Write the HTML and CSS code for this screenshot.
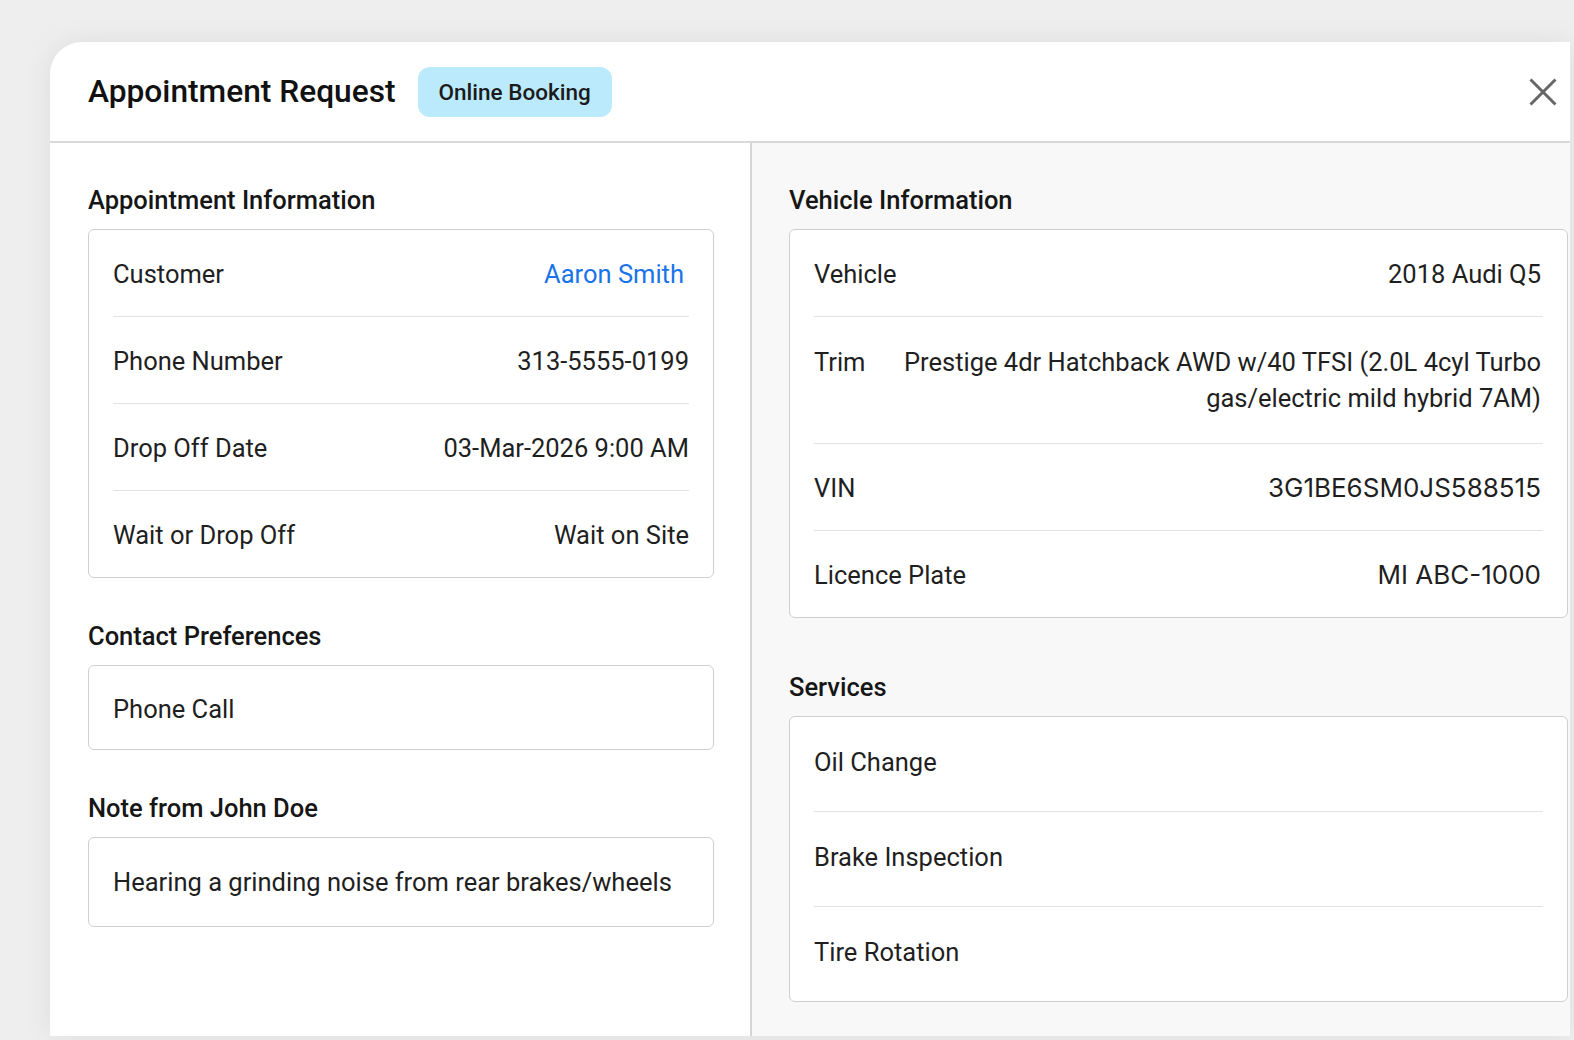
FILE: index.html
```html
<!DOCTYPE html>
<html lang="en">
<head>
<meta charset="utf-8">
<title>Appointment Request</title>
<link rel="stylesheet" href="styles.css">
</head>
<body>
<div class="stage">
  <div class="modal">
    <header class="modal-header">
      <div class="title-group">
        <h1 class="title">Appointment Request</h1>
        <span class="badge">Online Booking</span>
      </div>
      <button class="close" aria-label="Close">
        <svg width="28" height="28" viewBox="0 0 28 28"><path d="M1.5 1.5 L26.5 26.5 M26.5 1.5 L1.5 26.5" stroke="#666" stroke-width="3" fill="none"/></svg>
      </button>
    </header>
    <div class="modal-body">
      <section class="col col-left">
        <h2 class="section-title">Appointment Information</h2>
        <div class="card">
          <div class="row"><span class="label">Customer</span><span class="value link">Aaron Smith</span></div>
          <div class="row"><span class="label">Phone Number</span><span class="value">313-5555-0199</span></div>
          <div class="row"><span class="label">Drop Off Date</span><span class="value">03-Mar-2026 9:00 AM</span></div>
          <div class="row"><span class="label">Wait or Drop Off</span><span class="value">Wait on Site</span></div>
        </div>

        <h2 class="section-title spaced">Contact Preferences</h2>
        <div class="card">
          <div class="row compact"><span class="label">Phone Call</span></div>
        </div>

        <h2 class="section-title spaced">Note from John Doe</h2>
        <div class="card">
          <div class="row note"><span class="label">Hearing a grinding noise from rear brakes/wheels</span></div>
        </div>
      </section>

      <section class="col col-right">
        <h2 class="section-title">Vehicle Information</h2>
        <div class="card">
          <div class="row"><span class="label">Vehicle</span><span class="value">2018 Audi Q5</span></div>
          <div class="row multiline"><span class="label">Trim</span><span class="value">Prestige 4dr Hatchback AWD w/40 TFSI (2.0L 4cyl Turbo gas/electric mild hybrid 7AM)</span></div>
          <div class="row"><span class="label">VIN</span><span class="value code">3G1BE6SM0JS588515</span></div>
          <div class="row"><span class="label">Licence Plate</span><span class="value code">MI ABC-1000</span></div>
        </div>

        <h2 class="section-title spaced-lg">Services</h2>
        <div class="card services">
          <div class="row"><span class="label">Oil Change</span></div>
          <div class="row"><span class="label">Brake Inspection</span></div>
          <div class="row"><span class="label">Tire Rotation</span></div>
        </div>
      </section>
    </div>
  </div>
</div>
</body>
</html>
```
FILE: styles.css
```css
* { box-sizing: border-box; }

html, body {
  margin: 0;
  padding: 0;
  height: 100%;
}

body {
  background: #eeeeee;
  font-family: Roboto, "Noto Sans", "Liberation Sans", sans-serif;
  color: #1f1f1f;
  overflow: hidden;
}

.stage {
  padding: 42px 4px 4px 50px;
  height: 1040px;
}

.modal {
  height: 994px;
  width: 1520px;
  background: #ffffff;
  border-top-left-radius: 32px;
  box-shadow: 0 0 30px rgba(0, 0, 0, 0.07);
  display: flex;
  flex-direction: column;
  overflow: hidden;
}

.modal-header {
  height: 101px;
  flex: none;
  display: flex;
  align-items: center;
  justify-content: space-between;
  padding: 0 13px 0 38px;
  border-bottom: 2px solid #d9d9d9;
}

.title-group {
  display: flex;
  align-items: center;
  gap: 22px;
}

.title {
  margin: 0;
  font-size: 31.7px;
  font-weight: 500;
  color: #111111;
}

.badge {
  display: inline-flex;
  align-items: center;
  height: 50px;
  padding: 0 21px;
  border-radius: 12px;
  background: #bbeafd;
  color: #1b1b1b;
  font-size: 22.5px;
  font-weight: 500;
}

.close {
  border: 0;
  background: none;
  padding: 0;
  width: 28px;
  height: 28px;
  display: flex;
  cursor: pointer;
}

.modal-body {
  flex: 1;
  display: flex;
  min-height: 0;
}

.col {
  padding-top: 42px;
}

.col-left {
  width: 702px;
  flex: none;
  padding-left: 38px;
  padding-right: 36px;
  border-right: 2px solid #d6d6d6;
  background: #ffffff;
}

.col-right {
  flex: 1;
  padding-left: 37px;
  padding-right: 2px;
  background: #f8f8f8;
}

.section-title {
  margin: 0 0 14px;
  font-size: 25.5px;
  line-height: 30px;
  font-weight: 500;
  color: #161616;
}

.section-title.spaced { margin-top: 43px; }
.section-title.spaced-lg { margin-top: 54px; }

.card {
  background: #ffffff;
  border: 1.5px solid #cfcfcf;
  border-radius: 6px;
  padding: 0 24px;
}

.row {
  display: flex;
  justify-content: space-between;
  align-items: flex-start;
  gap: 24px;
  padding: 25px 0 23px;
  font-size: 25.5px;
  line-height: 38px;
}

.row.compact {
  padding: 24px 0 21px;
}

.row.note {
  padding: 25px 0;
}

.row.multiline {
  padding: 27px 0;
  line-height: 36px;
}

.row + .row {
  border-top: 1.5px solid #e3e3e3;
}

.services .row {
  padding: 26px 0 30px;
}

.label {
  flex: none;
  color: #1f1f1f;
}

.value {
  text-align: right;
  color: #1f1f1f;
}

.col-right .value {
  padding-right: 2px;
}

.value.link {
  color: #1a73e8;
  margin-right: 5px;
}

.value.code {
  font-family: Inter, "Liberation Sans", sans-serif;
  font-size: 26px;
}
```
